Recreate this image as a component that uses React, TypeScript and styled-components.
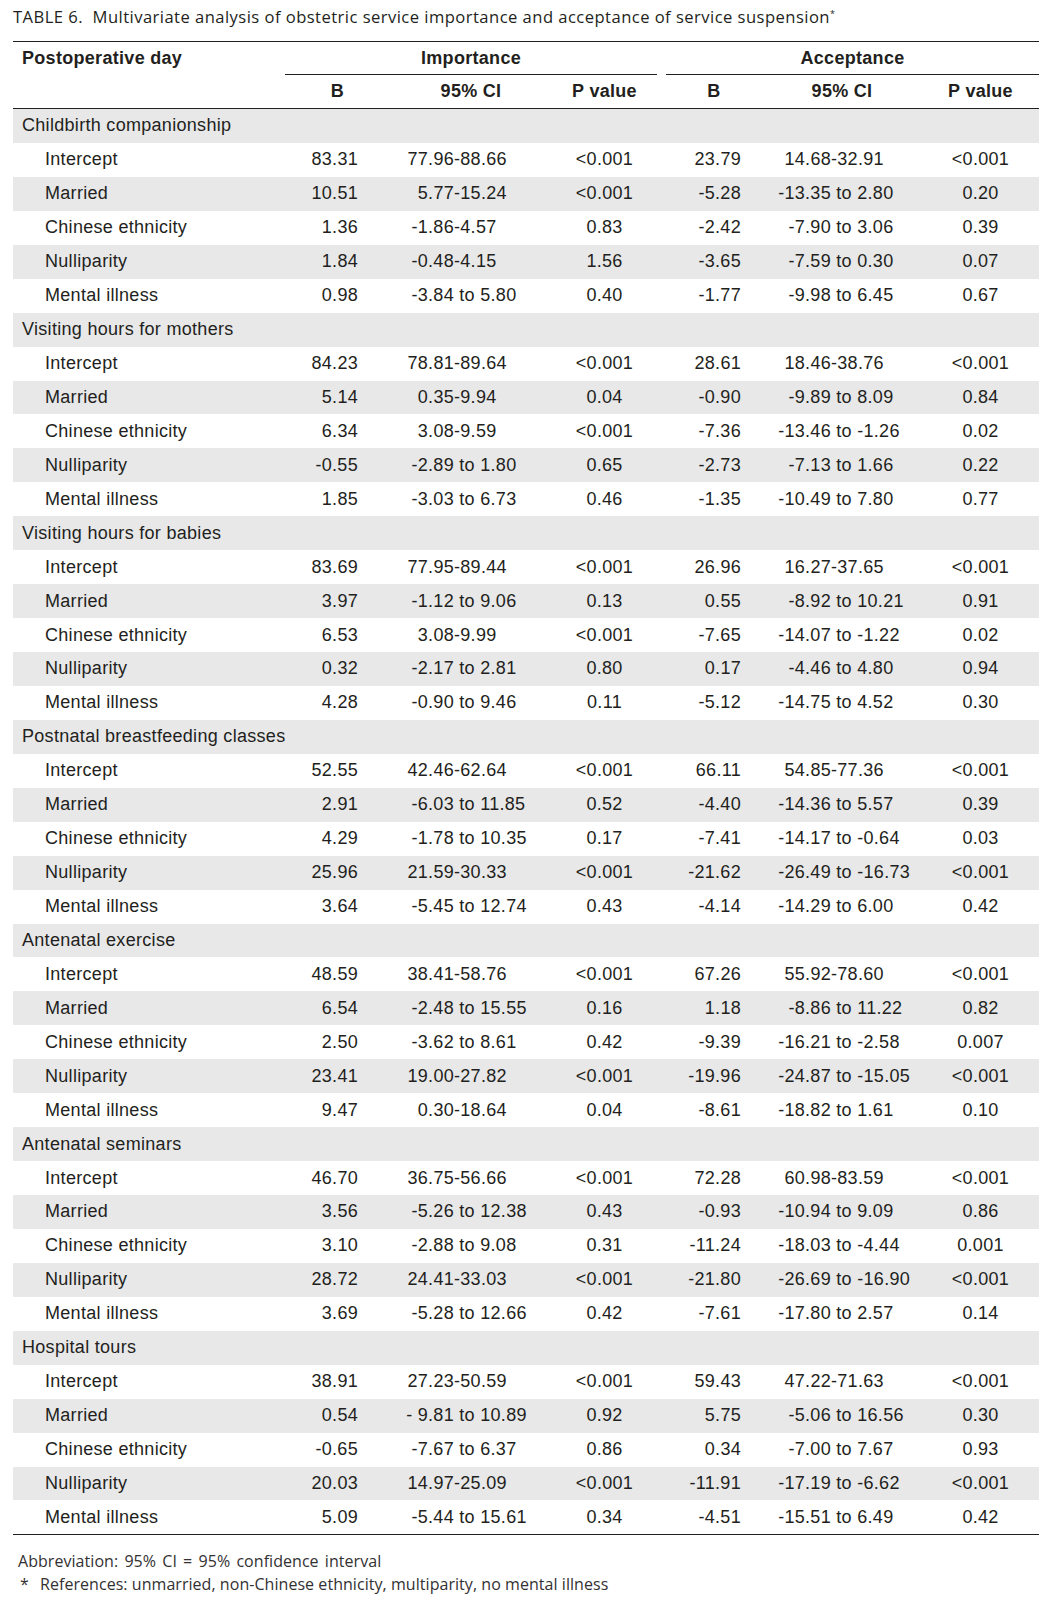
import React from "react";
import styled, { createGlobalStyle } from "styled-components";

type Row = [string, string, string, string, string, string, string];

interface Group {
  title: string;
  rows: Row[];
}

const GROUPS: Group[] = [
  {
    title: "Childbirth companionship",
    rows: [
      ["Intercept", "83.31", "77.96-88.66", "<0.001", "23.79", "14.68-32.91", "<0.001"],
      ["Married", "10.51", "5.77-15.24", "<0.001", "-5.28", "-13.35 to 2.80", "0.20"],
      ["Chinese ethnicity", "1.36", "-1.86-4.57", "0.83", "-2.42", "-7.90 to 3.06", "0.39"],
      ["Nulliparity", "1.84", "-0.48-4.15", "1.56", "-3.65", "-7.59 to 0.30", "0.07"],
      ["Mental illness", "0.98", "-3.84 to 5.80", "0.40", "-1.77", "-9.98 to 6.45", "0.67"],
    ],
  },
  {
    title: "Visiting hours for mothers",
    rows: [
      ["Intercept", "84.23", "78.81-89.64", "<0.001", "28.61", "18.46-38.76", "<0.001"],
      ["Married", "5.14", "0.35-9.94", "0.04", "-0.90", "-9.89 to 8.09", "0.84"],
      ["Chinese ethnicity", "6.34", "3.08-9.59", "<0.001", "-7.36", "-13.46 to -1.26", "0.02"],
      ["Nulliparity", "-0.55", "-2.89 to 1.80", "0.65", "-2.73", "-7.13 to 1.66", "0.22"],
      ["Mental illness", "1.85", "-3.03 to 6.73", "0.46", "-1.35", "-10.49 to 7.80", "0.77"],
    ],
  },
  {
    title: "Visiting hours for babies",
    rows: [
      ["Intercept", "83.69", "77.95-89.44", "<0.001", "26.96", "16.27-37.65", "<0.001"],
      ["Married", "3.97", "-1.12 to 9.06", "0.13", "0.55", "-8.92 to 10.21", "0.91"],
      ["Chinese ethnicity", "6.53", "3.08-9.99", "<0.001", "-7.65", "-14.07 to -1.22", "0.02"],
      ["Nulliparity", "0.32", "-2.17 to 2.81", "0.80", "0.17", "-4.46 to 4.80", "0.94"],
      ["Mental illness", "4.28", "-0.90 to 9.46", "0.11", "-5.12", "-14.75 to 4.52", "0.30"],
    ],
  },
  {
    title: "Postnatal breastfeeding classes",
    rows: [
      ["Intercept", "52.55", "42.46-62.64", "<0.001", "66.11", "54.85-77.36", "<0.001"],
      ["Married", "2.91", "-6.03 to 11.85", "0.52", "-4.40", "-14.36 to 5.57", "0.39"],
      ["Chinese ethnicity", "4.29", "-1.78 to 10.35", "0.17", "-7.41", "-14.17 to -0.64", "0.03"],
      ["Nulliparity", "25.96", "21.59-30.33", "<0.001", "-21.62", "-26.49 to -16.73", "<0.001"],
      ["Mental illness", "3.64", "-5.45 to 12.74", "0.43", "-4.14", "-14.29 to 6.00", "0.42"],
    ],
  },
  {
    title: "Antenatal exercise",
    rows: [
      ["Intercept", "48.59", "38.41-58.76", "<0.001", "67.26", "55.92-78.60", "<0.001"],
      ["Married", "6.54", "-2.48 to 15.55", "0.16", "1.18", "-8.86 to 11.22", "0.82"],
      ["Chinese ethnicity", "2.50", "-3.62 to 8.61", "0.42", "-9.39", "-16.21 to -2.58", "0.007"],
      ["Nulliparity", "23.41", "19.00-27.82", "<0.001", "-19.96", "-24.87 to -15.05", "<0.001"],
      ["Mental illness", "9.47", "0.30-18.64", "0.04", "-8.61", "-18.82 to 1.61", "0.10"],
    ],
  },
  {
    title: "Antenatal seminars",
    rows: [
      ["Intercept", "46.70", "36.75-56.66", "<0.001", "72.28", "60.98-83.59", "<0.001"],
      ["Married", "3.56", "-5.26 to 12.38", "0.43", "-0.93", "-10.94 to 9.09", "0.86"],
      ["Chinese ethnicity", "3.10", "-2.88 to 9.08", "0.31", "-11.24", "-18.03 to -4.44", "0.001"],
      ["Nulliparity", "28.72", "24.41-33.03", "<0.001", "-21.80", "-26.69 to -16.90", "<0.001"],
      ["Mental illness", "3.69", "-5.28 to 12.66", "0.42", "-7.61", "-17.80 to 2.57", "0.14"],
    ],
  },
  {
    title: "Hospital tours",
    rows: [
      ["Intercept", "38.91", "27.23-50.59", "<0.001", "59.43", "47.22-71.63", "<0.001"],
      ["Married", "0.54", "- 9.81 to 10.89", "0.92", "5.75", "-5.06 to 16.56", "0.30"],
      ["Chinese ethnicity", "-0.65", "-7.67 to 6.37", "0.86", "0.34", "-7.00 to 7.67", "0.93"],
      ["Nulliparity", "20.03", "14.97-25.09", "<0.001", "-11.91", "-17.19 to -6.62", "<0.001"],
      ["Mental illness", "5.09", "-5.44 to 15.61", "0.34", "-4.51", "-15.51 to 6.49", "0.42"],
    ],
  },
];

// label | imp B | imp CI | imp P | gap | acc B | acc CI | acc P
const COLS = "272px 105px 162px 105px 9px 96px 160px 117px";

function CI({ value, lead }: { value: string; lead: number }) {
  const m = value.match(/^(-?\s?[\d.]+)(.*)$/);
  const first = m ? m[1] : value;
  const rest = m ? m[2] : "";
  return (
    <S.CICell>
      <S.CILead $w={lead}>{first}</S.CILead>
      <span>{rest}</span>
    </S.CICell>
  );
}

export default function App() {
  let stripe = 0;
  return (
    <>
      <GlobalStyle />
      <S.Page>
        <S.Title>
          TABLE 6.&nbsp; Multivariate analysis of obstetric service importance and acceptance of
          service suspension<sup>*</sup>
        </S.Title>

        <S.Table>
          <S.HeadRow>
            <S.HeadLabel>Postoperative day</S.HeadLabel>
            <S.GroupHead $from={2} $to={5}>Importance</S.GroupHead>
            <S.GroupHead $from={6} $to={9}>Acceptance</S.GroupHead>
          </S.HeadRow>
          <S.HeadRow $ruled>
            <span />
            <S.HeadCell>B</S.HeadCell>
            <S.HeadCell>95% CI</S.HeadCell>
            <S.HeadCell>P value</S.HeadCell>
            <span />
            <S.HeadCell>B</S.HeadCell>
            <S.HeadCell>95% CI</S.HeadCell>
            <S.HeadCell>P value</S.HeadCell>
          </S.HeadRow>

          {GROUPS.map((g) => (
            <React.Fragment key={g.title}>
              <S.Row $shaded={stripe++ % 2 === 0}>
                <S.GroupLabel>{g.title}</S.GroupLabel>
              </S.Row>
              {g.rows.map((r) => (
                <S.Row key={g.title + r[0]} $shaded={stripe++ % 2 === 0}>
                  <S.Label>{r[0]}</S.Label>
                  <S.Num $pad={32}>{r[1]}</S.Num>
                  <CI value={r[2]} lead={64} />
                  <S.PVal>{r[3]}</S.PVal>
                  <span />
                  <S.Num $pad={21}>{r[4]}</S.Num>
                  <CI value={r[5]} lead={69} />
                  <S.PVal>{r[6]}</S.PVal>
                </S.Row>
              ))}
            </React.Fragment>
          ))}
        </S.Table>

        <S.Notes>
          <S.Note $wide>Abbreviation: 95% CI = 95% confidence interval</S.Note>
          <S.Note>
            <S.Mark>*</S.Mark>
            References: unmarried, non-Chinese ethnicity, multiparity, no mental illness
          </S.Note>
        </S.Notes>
      </S.Page>
    </>
  );
}

const GlobalStyle = createGlobalStyle`
  body {
    margin: 0;
    background: #ffffff;
    color: #231f20;
  }
`;

const S = {
  Page: styled.div`
    width: 1026px;
    padding: 6px 13px 0;
  `,
  Title: styled.div`
    font-family: "Open Sans", Lato, sans-serif;
    font-size: 16.6px;
    letter-spacing: 0.45px;
    line-height: 22px;
    color: #231f20;
    margin-bottom: 13px;
    white-space: nowrap;
    sup {
      font-size: 9px;
      line-height: 0;
      vertical-align: 6px;
    }
  `,
  Table: styled.div`
    border-top: 1px solid #231f20;
    border-bottom: 1px solid #231f20;
    font-family: "Liberation Sans", Arial, Helvetica, sans-serif;
    font-size: 18px;
    letter-spacing: 0.3px;
    color: #231f20;
  `,
  HeadRow: styled.div<{ $ruled?: boolean }>`
    display: grid;
    grid-template-columns: ${COLS};
    height: 33px;
    align-items: stretch;
    font-weight: 700;
    border-bottom: ${({ $ruled }) => ($ruled ? "1px solid #231f20" : "none")};
  `,
  HeadLabel: styled.div`
    display: flex;
    align-items: center;
    padding-left: 9px;
  `,
  GroupHead: styled.div<{ $from: number; $to: number }>`
    grid-column: ${({ $from, $to }) => `${$from} / ${$to}`};
    display: flex;
    align-items: center;
    justify-content: center;
    border-bottom: 1px solid #231f20;
  `,
  HeadCell: styled.div`
    display: flex;
    align-items: center;
    justify-content: center;
  `,
  Row: styled.div<{ $shaded: boolean }>`
    display: grid;
    grid-template-columns: ${COLS};
    height: 33.95px;
    align-items: center;
    background: ${({ $shaded }) => ($shaded ? "#e8e8e9" : "#ffffff")};
    white-space: pre;
  `,
  GroupLabel: styled.div`
    grid-column: 1 / -1;
    padding-left: 9px;
  `,
  Label: styled.div`
    padding-left: 32px;
  `,
  Num: styled.div<{ $pad: number }>`
    text-align: right;
    padding-right: ${({ $pad }) => $pad}px;
  `,
  CICell: styled.div`
    display: flex;
  `,
  CILead: styled.span<{ $w: number }>`
    flex: 0 0 ${({ $w }) => $w}px;
    text-align: right;
  `,
  PVal: styled.div`
    text-align: center;
  `,
  Notes: styled.div`
    padding: 15px 0 0 5px;
    font-family: "Open Sans", Lato, sans-serif;
    font-size: 16px;
    letter-spacing: 0.05px;
    line-height: 23px;
    color: #333132;
  `,
  Note: styled.div<{ $wide?: boolean }>`
    display: flex;
    white-space: pre;
    word-spacing: ${({ $wide }) => ($wide ? "2px" : "0")};
  `,
  Mark: styled.span`
    width: 20px;
    padding-left: 2px;
  `,
};
